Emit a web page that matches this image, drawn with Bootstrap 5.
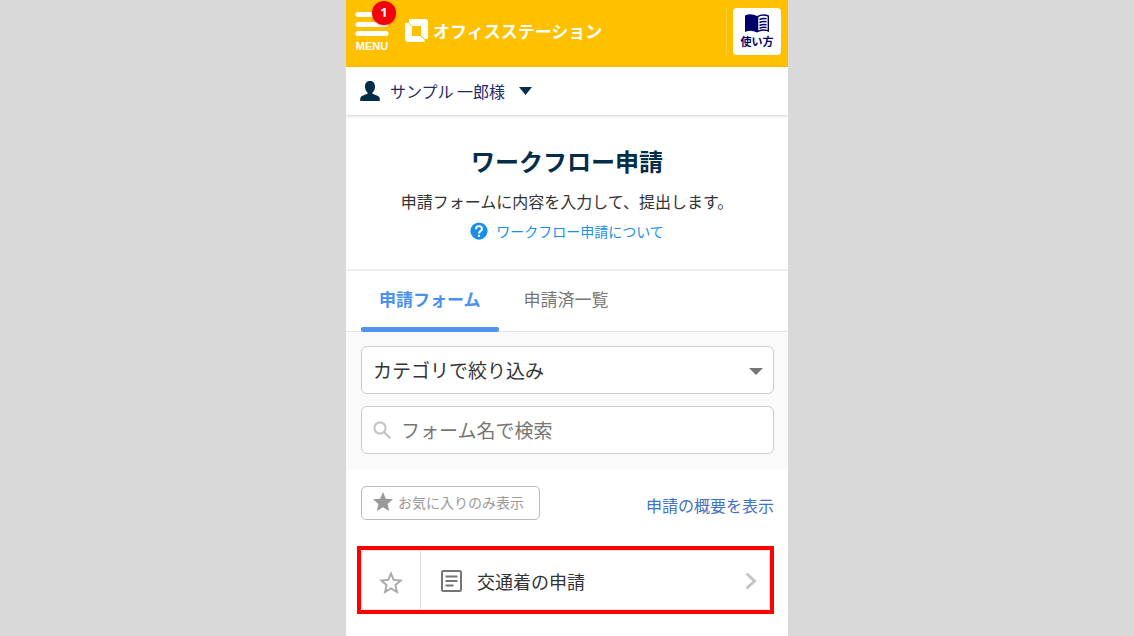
<!DOCTYPE html>
<html lang="ja">
<head>
<meta charset="utf-8">
<meta name="viewport" content="width=device-width, initial-scale=1">
<title>ワークフロー申請</title>
<link href="https://cdn.jsdelivr.net/npm/bootstrap@5.3.0/dist/css/bootstrap.min.css" rel="stylesheet">
<style>
  body { background: #d9d9d9; color: #333; font-family: "Noto Sans CJK JP", sans-serif; }
  svg { display: block; flex: none; }
  a { text-decoration: none; }
  .phone { max-width: 442px; background: #fff; }
  .topbar { background: #ffc000; height: 67px; padding: 8px 7px 12px 9px; }
  .menu-btn { width: 34px; color: #fff; font: bold 11px/12px "Liberation Sans", sans-serif; padding-top: 4px; }
  .notice { top: -7px; left: 17px; width: 24px; height: 24px; background: #f4000a; font: bold 13px/22px "Noto Sans", sans-serif; box-shadow: 0 1px 3px #0004; }
  .brand { color: #fff; font-size: 17px; font-weight: 700; line-height: 24px; margin-left: 16px; padding-bottom: 2px; }
  .guide-wrap { border-left: 1px solid #ffcd33; padding-left: 6px; }
  .guide { width: 48px; height: 47px; background: #fff; border-radius: 4px; color: #00006b; font-size: 11px; font-weight: 700; line-height: 16px; }
  .userbar { height: 48px; padding: 0 14px; box-shadow: 0 1px 3px #0003; }
  .userbar button { color: #1f2a66; font-size: 16px; line-height: 24px; gap: 10px; }
  .intro { padding: 29px 16px 24px; border-bottom: 2px solid #eee; margin-top: 1px; }
  .intro h1 { color: #032d48; font-size: 24px; font-weight: 700; line-height: 32px; margin-bottom: 8px; }
  .intro p { font-size: 16px; line-height: 32px; margin: 0; }
  .intro a { color: #1890e8; font-size: 14px; line-height: 28px; gap: 8px; }
  .tabs { height: 61px; padding: 0 15px; border-bottom: 1px solid #e4e4e4; }
  .tabs .nav-link { color: #777; font-size: 17px; line-height: 24px; padding: 16px 18px 0; height: 61px; }
  .tabs .nav-link.active { color: #4a90ee; font-weight: 700; }
  .tabs .active::after { content: ""; display: block; height: 5px; margin: 16px -18px 0; background: #5092ee; border-radius: 2px; }
  .tabs .nav-item + .nav-item { margin-left: 7px; }
  .filters { background: #fafafa; padding: 14px 14px 15px 15px; gap: 12px; }
  .field { height: 48px; border: 1px solid #ccc; border-radius: 6px; font-size: 19px; line-height: 28px; color: #333; background-color: #fff; }
  select.field { appearance: none; padding: 0 40px 0 11px; }
  .caret { right: 11px; top: 22px; pointer-events: none; }
  .search { padding: 0 11px; gap: 9px; }
  .search input { color: #333; min-width: 0; outline: 0; }
  .search input::placeholder { color: #757575; opacity: 1; }
  .tools { padding: 17px 14px 26px 15px; }
  .fav { height: 34px; border: 1px solid #bbb; border-radius: 5px; background: #fff; color: #999; font-size: 14px; line-height: 20px; padding: 0 15px 3px 11px; gap: 5px; }
  .tools a { color: #3f73c4; font-size: 16px; line-height: 24px; padding-top: 3px; }
  .highlight { border: 4px solid #f00; margin: 0 14px 22px 11px; height: 68px; }
  .entry { border: 1px solid #dfe5e5; border-radius: 4px; }
  .star { width: 59px; border-right: 1px solid #ddd !important; }
  .entry a { color: #333; font-size: 18px; line-height: 28px; padding: 2px 12px 0 18px; gap: 14px; }
</style>
</head>
<body>
<main class="phone w-100 min-vh-100 mx-auto overflow-hidden">
  <header class="topbar d-flex align-items-center">
    <button type="button" class="menu-btn border-0 bg-transparent position-relative px-0 pb-0 align-self-start d-flex flex-column align-items-center">
      <svg width="34" height="28" viewBox="0 0 34 28" fill="none" stroke="#fff" stroke-width="5" stroke-linecap="round"><path d="M3 2.500h28M3 12.500h28M3 21.500h28"/></svg>
      <span>MENU</span>
      <span class="notice position-absolute rounded-circle text-center">1</span>
    </button>
    <div class="brand d-flex align-items-center">
      <svg width="24" height="24" viewBox="0 0 24 24"><path fill="#fff" fill-rule="evenodd" d="M4 0h16q3 0 3 3v17h-3v3H3q-3 0-3-3V3h4zM7 7v10h9V7z"/><path fill="none" stroke="#ffc000" stroke-width="1" d="M3.500 0v3.500H0M3.500 3.500l3.500 4M16 17l4 3.500V24M20 20.500h3.500"/></svg>
      <span class="ms-1">オフィスステーション</span>
    </div>
    <div class="guide-wrap ms-auto">
      <button type="button" class="guide border-0 p-0 d-flex flex-column align-items-center justify-content-center">
        <svg width="24" height="19" viewBox="0 0 24 19"><path fill="#00006b" d="M0 1.500Q6-1 12 2 18-1 24 1.500V18Q18 15.500 12 18.500 6 15.500 0 18z"/><path fill="#fff" d="M13.300 3Q18 .8 22.600 2.500V16Q18 14.500 13.300 16.500z"/><path fill="none" stroke="#00006b" stroke-width="1.400" d="M14.500 5.500q3.500-1.500 7-.8M14.500 8.500q3.500-1.500 7-.8M14.500 11.500q3.500-1.500 7-.8M14.500 14.300q3.500-1.500 7-.8"/></svg>
        <span>使い方</span>
      </button>
    </div>
  </header>

  <div class="userbar d-flex align-items-center">
    <button type="button" class="border-0 bg-transparent p-0 d-flex align-items-center">
      <svg width="20" height="20" viewBox="0 0 20 20"><path fill="#032d48" d="M10 0c3 0 5 2 5 5.500 0 2.500-.8 4.500-2.500 6v1.200l5 2q2 .8 2.300 2.800V20H.2v-2.500q.3-2 2.300-2.800l5-2v-1.200C5.800 10 5 8 5 5.500 5 2 7 0 10 0z"/></svg>
      <span>サンプル 一郎様</span>
      <svg class="ms-1" width="13" height="8" viewBox="0 0 13 8"><path fill="#032d48" d="M0 0h13L6.500 8z"/></svg>
    </button>
  </div>

  <section class="intro text-center">
    <h1>ワークフロー申請</h1>
    <p>申請フォームに内容を入力して、提出します。</p>
    <a href="#" class="d-inline-flex align-items-center">
      <svg width="18" height="18" viewBox="0 0 24 24"><circle cx="12" cy="12" r="11.500" fill="#1890e8"/><path fill="none" stroke="#fff" stroke-width="2.600" d="M8 9.500Q8 5.500 12 5.500t4 3.700c0 2.600-4 2.800-4 6"/><path fill="#fff" d="M10.600 17h2.800v2.800h-2.800z"/></svg>
      <span>ワークフロー申請について</span>
    </a>
  </section>

  <ul class="tabs nav flex-nowrap">
    <li class="nav-item"><a class="nav-link active" aria-current="page" href="#">申請フォーム</a></li>
    <li class="nav-item"><a class="nav-link" href="#">申請済一覧</a></li>
  </ul>

  <section class="filters d-flex flex-column">
    <div class="position-relative">
      <select class="field w-100" aria-label="カテゴリ"><option>カテゴリで絞り込み</option></select>
      <svg class="caret position-absolute" width="14" height="7" viewBox="0 0 14 7"><path fill="#757575" d="M0 0h14L7 7z"/></svg>
    </div>
    <label class="field search d-flex align-items-center">
      <svg width="19" height="19" viewBox="0 0 19 19" fill="none" stroke="#c4c4c4" stroke-width="2.200"><circle cx="7" cy="7" r="5.600"/><path d="M11 11l6.500 6.500"/></svg>
      <input type="text" class="border-0 bg-transparent p-0 flex-grow-1" placeholder="フォーム名で検索" aria-label="フォーム名で検索">
    </label>
  </section>

  <div class="tools d-flex align-items-center justify-content-between">
    <button type="button" class="fav d-flex align-items-center">
      <svg width="20" height="19" viewBox="2 2 20 19"><path fill="#999" d="M12 17.270 18.180 21l-1.640-7.030L22 9.240l-7.190-.61L12 2 9.190 8.630 2 9.240l5.460 4.730L5.820 21z"/></svg>
      <span>お気に入りのみ表示</span>
    </button>
    <a href="#">申請の概要を表示</a>
  </div>

  <div class="highlight d-flex">
    <div class="entry d-flex flex-grow-1">
      <button type="button" class="star border-0 bg-transparent px-0 pb-0 pt-1 d-flex align-items-center justify-content-center" aria-label="お気に入り">
        <svg width="24" height="23" viewBox="2 2 20 19"><path fill="#aaa" d="M22 9.240l-7.190-.62L12 2 9.190 8.630 2 9.240l5.460 4.730L5.820 21 12 17.270 18.180 21l-1.630-7.030zM12 15.400l-3.760 2.270 1-4.280-3.320-2.880 4.380-.38L12 6.100l1.710 4.040 4.380.38-3.320 2.880 1 4.280z"/></svg>
      </button>
      <a href="#" class="d-flex flex-grow-1 align-items-center">
        <svg width="24" height="22" viewBox="0 0 24 22" fill="none" stroke="#757575" stroke-width="2"><rect x="3" y="1" width="19" height="20" rx="1.500"/><path d="M6.500 6.500h12M6.500 11h12M6.500 15.500h8"/></svg>
        <span>交通着の申請</span>
        <svg class="ms-auto" width="12" height="18" viewBox="0 0 12 18" fill="none" stroke="#c4c4c4" stroke-width="3"><path d="M1.500 1.500 9.500 9l-8 7.500"/></svg>
      </a>
    </div>
  </div>
</main>
<script src="https://cdn.jsdelivr.net/npm/bootstrap@5.3.0/dist/js/bootstrap.bundle.min.js"></script>
</body>
</html>
